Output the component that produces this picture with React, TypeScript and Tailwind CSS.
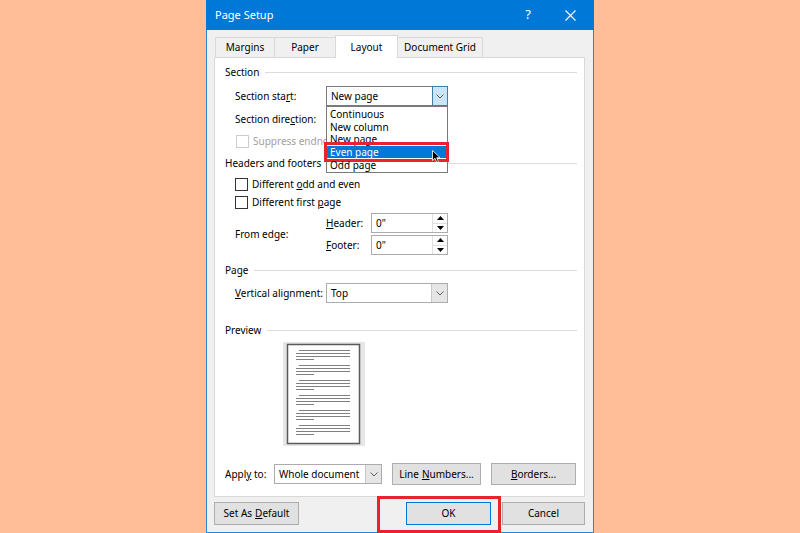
import React from 'react';

const Chevron: React.FC = () => (
  <svg width="8" height="5" viewBox="0 0 8 5">
    <path d="M0.5 0.5 L4 4 L7.5 0.5" fill="none" stroke="#606060" strokeWidth="1" />
  </svg>
);

const Combo: React.FC<{ value: string; w: string; open?: boolean; children?: React.ReactNode }> = ({ value, w, open, children }) => (
  <div className={`relative flex h-[20px] ${w} border ${open ? 'border-[#7a7a7a]' : 'border-[#acacac]'} bg-white`}>
    <div className="flex-1 flex items-center pl-[4px] whitespace-nowrap">{value}</div>
    {open ? (
      <div className="w-[16px] -my-px -mr-px flex items-center justify-center bg-[#cce4f7] border border-[#3c7fb1]">
        <Chevron />
      </div>
    ) : (
      <div className="w-[16px] flex items-center justify-center bg-[#e5e5e5] border-l border-[#c8c8c8]">
        <Chevron />
      </div>
    )}
    {children}
  </div>
);

const Check: React.FC<{ disabled?: boolean }> = ({ disabled }) => (
  <div className={`w-[13px] h-[13px] bg-white border ${disabled ? 'border-[#cccccc]' : 'border-[#333333]'}`} />
);

const Group: React.FC<{ title: string; className?: string }> = ({ title, className }) => (
  <div className={`flex items-center h-[16px] ${className ?? ''}`}>
    <span className="whitespace-nowrap">{title}</span>
    <div className="flex-1 h-px bg-[#dcdcdc] ml-[6px]" />
  </div>
);

const Spin: React.FC = () => (
  <div className="flex h-[20px] w-[77px] border border-[#acacac] bg-white">
    <div className="flex-1 flex items-center pl-[4px]">0"</div>
    <div className="w-[15px] flex flex-col border-l border-[#e0e0e0]">
      <div className="flex-1 flex items-center justify-center border-b border-[#e0e0e0]">
        <svg width="7" height="4" viewBox="0 0 7 4"><path d="M0 4 L3.5 0 L7 4 Z" fill="#000" /></svg>
      </div>
      <div className="flex-1 flex items-center justify-center">
        <svg width="7" height="4" viewBox="0 0 7 4"><path d="M0 0 L3.5 4 L7 0 Z" fill="#000" /></svg>
      </div>
    </div>
  </div>
);

const Btn: React.FC<{ w: string; h?: string; primary?: boolean; children: React.ReactNode }> = ({ w, h, primary, children }) => (
  <div className={`${w} ${h ?? 'h-[23px]'} flex items-center justify-center whitespace-nowrap bg-[#e1e1e1] border ${primary ? 'border-[#0078d7]' : 'border-[#adadad]'}`}>
    {children}
  </div>
);

const PreviewPage: React.FC = () => {
  const paras = [8, 23, 38, 53, 68, 83];
  return (
    <svg width="82" height="104" viewBox="0 0 82 104">
      <rect x="0" y="0" width="82" height="104" fill="#e6e6e6" />
      <rect x="4.5" y="2.5" width="72" height="99" fill="#fff" stroke="#5a5a5a" strokeWidth="1.5" />
      {paras.map((y) => (
        <g key={y} fill="#808080">
          <rect x="16" y={y} width="51" height="1" />
          <rect x="13" y={y + 3} width="54" height="1" />
          <rect x="13" y={y + 6} width="54" height="1" />
          <rect x="13" y={y + 9} width="18" height="1" />
        </g>
      ))}
    </svg>
  );
};

const items = ['Continuous', 'New column', 'New page', 'Even page', 'Odd page'];

export default function App() {
  return (
    <div className="w-[800px] h-[533px] bg-[#ffbe98] font-['Noto_Sans',sans-serif] text-[10px] text-black overflow-hidden">
      <div className="ml-[206px] w-[388px] h-[533px] flex flex-col bg-[#f0f0f0] border border-t-0 border-[#2c86d6]">
        {/* title bar */}
        <div className="h-[30px] -mx-px bg-[#0078d7] flex items-center text-white">
          <span className="ml-[9px] text-[11px]">Page Setup</span>
          <span className="ml-auto mr-[34px] text-[13px]">?</span>
          <svg className="mr-[18px]" width="11" height="11" viewBox="0 0 11 11">
            <path d="M0.5 0.5 L10.5 10.5 M10.5 0.5 L0.5 10.5" stroke="#fff" strokeWidth="1.1" />
          </svg>
        </div>

        <div className="flex-1 flex flex-col pl-[7px] pr-[8px] pt-[5px] pb-[7px]">
          {/* tabs */}
          <div className="flex items-end h-[22px] ml-[1px]">
            <div className="w-[60px] h-[20px] flex items-center justify-center border border-b-0 border-[#d9d9d9]">Margins</div>
            <div className="w-[62px] -ml-px h-[20px] flex items-center justify-center border border-b-0 border-[#d9d9d9]">Paper</div>
            <div className="relative z-10 w-[63px] -ml-px -mb-px h-[23px] flex items-center justify-center bg-white border border-b-0 border-[#d9d9d9]">
              Layout
            </div>
            <div className="w-[86px] -ml-px h-[20px] flex items-center justify-center border border-b-0 border-[#d9d9d9]">Document Grid</div>
          </div>

          {/* panel */}
          <div className="h-[440px] bg-white border border-[#d9d9d9] pl-[10px] pr-[7px] flex flex-col">
            <Group title="Section" className="mt-[6px]" />

            <div className="flex items-center h-[20px] mt-[6px] ml-[10px]">
              <span className="w-[91px] whitespace-nowrap">Section sta<u>r</u>t:</span>
              <Combo value="New page" w="w-[122px]" open>
                <div className="absolute z-20 left-[-1px] top-[19px] w-[122px] bg-white border border-[#7a7a7a] py-px">
                  {items.map((it) => (
                    <div
                      key={it}
                      className={`relative h-[12.6px] flex items-center pl-[3px] ${it === 'Even page' ? 'bg-[#0078d7] text-white' : ''}`}
                    >
                      <span className="leading-none">{it}</span>
                      {it === 'Even page' && (
                        <>
                          <div className="absolute left-[-3px] right-[-2px] top-[-4px] bottom-[-4px] border-[3px] border-[#e8232d]" />
                          <svg className="absolute left-[105px] top-[4px]" width="9" height="13" viewBox="0 0 9 13">
                            <path d="M0.5 0.5 L0.5 10.5 L3 8.3 L4.8 12.3 L6.4 11.6 L4.7 7.7 L8 7.7 Z" fill="#000" stroke="#fff" strokeWidth="0.8" />
                          </svg>
                        </>
                      )}
                    </div>
                  ))}
                </div>
              </Combo>
            </div>

            <div className="flex items-center h-[20px] mt-[3px] ml-[10px]">
              <span className="w-[91px] whitespace-nowrap">Section dire<u>c</u>tion:</span>
            </div>

            <div className="flex items-center h-[16px] mt-[4px] ml-[11px] text-[#a0a0a0]">
              <Check disabled />
              <span className="ml-[4px] whitespace-nowrap">Suppress endnotes</span>
            </div>

            <Group title="Headers and footers" className="mt-[6px]" />

            <div className="flex items-center h-[16px] mt-[5px] ml-[10px]">
              <Check />
              <span className="ml-[4px]">Different <u>o</u>dd and even</span>
            </div>
            <div className="flex items-center h-[16px] mt-[2px] ml-[10px]">
              <Check />
              <span className="ml-[4px]">Different first <u>p</u>age</span>
            </div>

            <div className="flex items-center h-[42px] mt-[3px] ml-[10px]">
              <span className="w-[91px]">From edge:</span>
              <div className="flex flex-col gap-[2px]">
                <div className="flex items-center h-[20px]">
                  <span className="w-[45px]"><u>H</u>eader:</span>
                  <Spin />
                </div>
                <div className="flex items-center h-[20px]">
                  <span className="w-[45px]"><u>F</u>ooter:</span>
                  <Spin />
                </div>
              </div>
            </div>

            <Group title="Page" className="mt-[7px]" />

            <div className="flex items-center h-[20px] mt-[5px] ml-[10px]">
              <span className="w-[91px] whitespace-nowrap"><u>V</u>ertical alignment:</span>
              <Combo value="Top" w="w-[122px]" />
            </div>

            <Group title="Preview" className="mt-[19px]" />

            <div className="mt-[4px] ml-[58px] h-[104px]">
              <PreviewPage />
            </div>

            <div className="flex items-center h-[22px] mt-[17px]">
              <span className="w-[49px] whitespace-nowrap">Appl<u>y</u> to:</span>
              <Combo value="Whole document" w="w-[108px]" />
              <div className="ml-[10px]">
                <Btn w="w-[89px]" h="h-[22px]">Line <u className="ml-[3px]">N</u>umbers...</Btn>
              </div>
              <div className="ml-[10px]">
                <Btn w="w-[85px]" h="h-[22px]"><u>B</u>orders...</Btn>
              </div>
            </div>
          </div>

          {/* bottom buttons */}
          <div className="flex items-center h-[23px] mt-[5px]">
            <Btn w="w-[85px]">Set As <u className="ml-[3px]">D</u>efault</Btn>
            <div className="flex-1" />
            <div className="relative">
              <Btn w="w-[85px]" primary>OK</Btn>
              <div className="absolute left-[-29px] right-[-10px] top-[-6px] bottom-[-8px] border-[3px] border-[#e8232d]" />
            </div>
            <div className="ml-[11px]">
              <Btn w="w-[83px]">Cancel</Btn>
            </div>
          </div>
        </div>
      </div>
    </div>
  );
}
